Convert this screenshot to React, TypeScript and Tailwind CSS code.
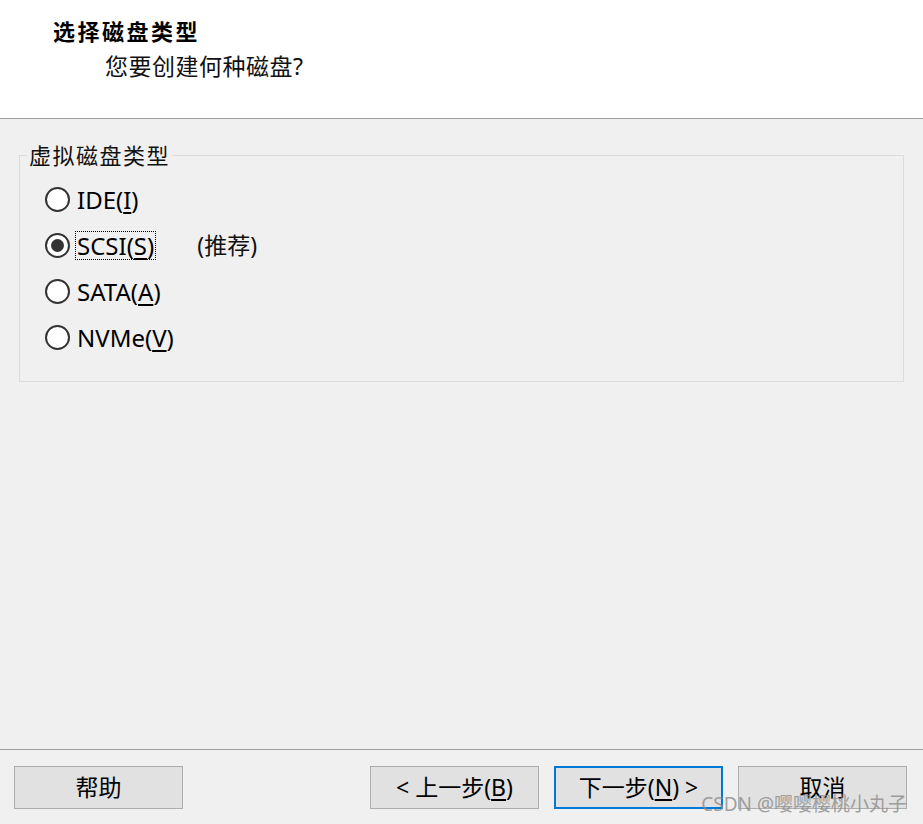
const FONT = "font-['Segoe_UI','Noto_Sans','Noto_Sans_CJK_SC',sans-serif]";

function Radio({ label, mnemonic, checked, focused, extra }: { label: string; mnemonic: string; checked?: boolean; focused?: boolean; extra?: string }) {
  return (
    <div className="flex h-[46px] items-center">
      <span className="ml-[25px] flex h-[25px] w-[25px] items-center justify-center rounded-full border-2 border-[#333333] bg-white">
        {checked && <span className="h-[13px] w-[13px] rounded-full bg-[#333333]" />}
      </span>
      <span
        className={`ml-[6px] px-[1px] text-[24px] leading-[27px] text-black ${focused ? 'outline outline-1 outline-dotted outline-black' : ''}`}
      >
        {label}(<span className="underline underline-offset-[3px]">{mnemonic}</span>)
      </span>
      {extra && <span className="ml-[42px] text-[23px] leading-[27px] text-[#111]">{extra}</span>}
    </div>
  );
}

function Btn({ children, primary }: { children: React.ReactNode; primary?: boolean }) {
  return (
    <button
      className={`flex h-[43px] w-[169px] items-center justify-center bg-[#e1e1e1] text-[23px] text-black ${primary ? 'border-2 border-[#0078d7]' : 'border border-[#adadad]'}`}
    >
      {children}
    </button>
  );
}

export default function App() {
  return (
    <div className={`relative flex h-[824px] w-[923px] flex-col overflow-hidden bg-[#f0f0f0] ${FONT}`}>
      {/* Header */}
      <div className="h-[119px] shrink-0 border-b border-[#a0a0a0] bg-white">
        <div className="ml-[53px] pt-[16px] text-[22px] font-bold leading-[30px] tracking-[2.5px] text-black">选择磁盘类型</div>
        <div className="ml-[105px] mt-[3px] text-[23px] leading-[34px] tracking-[0.5px] text-[#111]">您要创建何种磁盘?</div>
      </div>

      {/* Body */}
      <div className="flex-1 px-[19px] pt-[36px]">
        <div className="relative h-[227px] w-[885px] border border-[#dcdcdc]">
          <div className="absolute left-[7px] top-[-15px] bg-[#f0f0f0] px-[2px] text-[22px] leading-[28px] tracking-[1.5px] text-[#111]">
            虚拟磁盘类型
          </div>
          <div className="pt-[20px]">
            <Radio label="IDE" mnemonic="I" />
            <Radio label="SCSI" mnemonic="S" checked focused extra="(推荐)" />
            <Radio label="SATA" mnemonic="A" />
            <Radio label="NVMe" mnemonic="V" />
          </div>
        </div>
      </div>

      {/* Footer */}
      <div className="h-[75px] shrink-0 border-t border-[#a0a0a0]">
        <div className="flex items-center pl-[14px] pr-[16px] pt-[16px]">
          <Btn>帮助</Btn>
          <div className="ml-auto flex gap-[15px]">
            <Btn>
              &lt; 上一步(<span className="underline underline-offset-[3px]">B</span>)
            </Btn>
            <Btn primary>
              下一步(<span className="underline underline-offset-[3px]">N</span>) &gt;
            </Btn>
            <Btn>取消</Btn>
          </div>
        </div>
      </div>

      <div className="pointer-events-none absolute right-[16px] top-[791px] text-[19px] leading-[26px] text-[#8a8a8a]/80">
        CSDN @嘤嘤樱桃小丸子
      </div>
    </div>
  );
}
